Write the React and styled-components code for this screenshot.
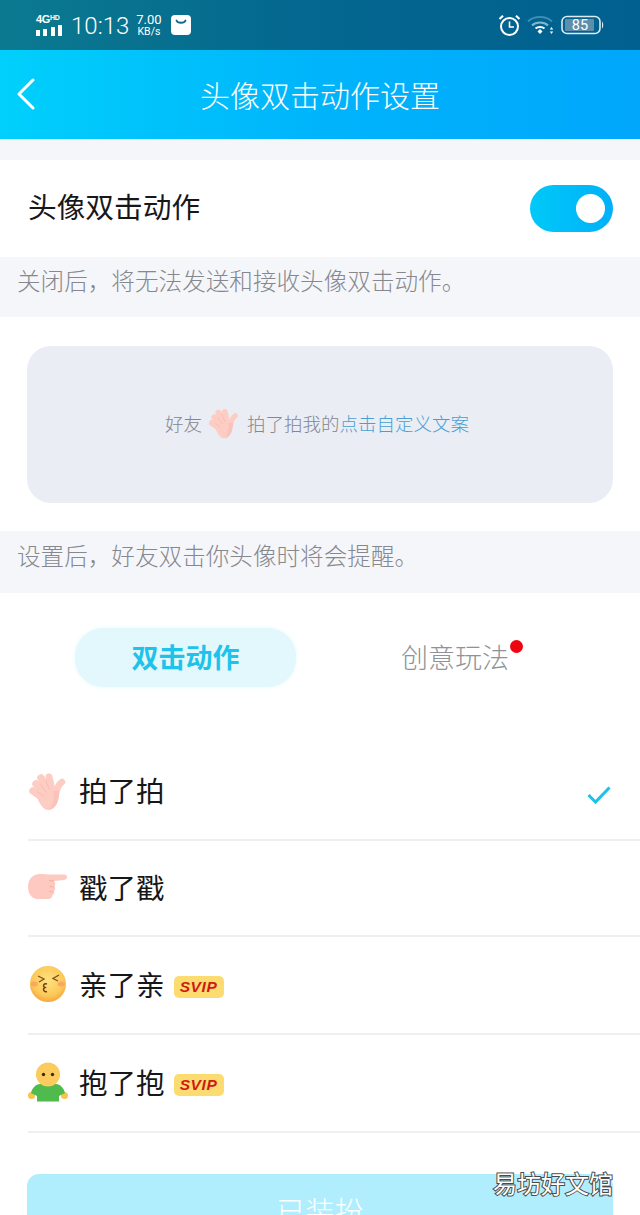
import React from 'react';
import styled, { createGlobalStyle } from 'styled-components';

const GlobalStyle = createGlobalStyle`
  html, body { margin: 0; padding: 0; background: #fff; }
  body { font-family: "Noto Sans CJK SC", "Noto Sans", sans-serif; }
`;

const Page = styled.div`
  position: relative;
  width: 640px;
  height: 1215px;
  overflow: hidden;
  background: #fff;
`;

const StatusBar = styled.div`
  height: 50px;
  display: flex;
  align-items: center;
  justify-content: space-between;
  padding: 0 36px;
  box-sizing: border-box;
  background: linear-gradient(90deg, #0b7a90, #04688f 45%, #01608f);
  color: #fff;
`;

const StatusGroup = styled.div`
  display: flex;
  align-items: center;
`;

const Signal = styled.div`
  width: 26px;
  display: flex;
  flex-direction: column;
  margin-right: 9px;
  margin-top: -2px;
`;

const NetLabel = styled.div`
  font-family: "Liberation Sans", sans-serif;
  font-weight: 700;
  font-size: 11px;
  line-height: 11px;
  white-space: nowrap;
  letter-spacing: -0.3px;
`;

const Small = styled.span`
  font-size: 7px;
  vertical-align: 3px;
`;

const Bars = styled.div`
  display: flex;
  align-items: flex-end;
  justify-content: space-between;
  height: 11px;
`;

const Bar = styled.i`
  display: block;
  width: 4px;
  height: ${p => p.$h}px;
  background: #fff;
`;

const Clock = styled.div`
  font-family: Roboto, sans-serif;
  font-weight: 300;
  font-size: 24px;
  line-height: 28px;
  margin-right: 7px;
  margin-top: 2px;
`;

const Speed = styled.div`
  font-family: Roboto, sans-serif;
  font-size: 13px;
  line-height: 12px;
  text-align: center;
  margin-right: 9px;
  margin-top: 1px;
  span { display: block; font-size: 10.5px; line-height: 11px; }
`;

const NavBar = styled.div`
  position: relative;
  height: 89px;
  display: flex;
  align-items: center;
  justify-content: center;
  background: linear-gradient(90deg, #00d0fb, #00b4fb 50%, #00a7fb);
`;

const BackIcon = styled.svg`
  position: absolute;
  left: 16px;
  top: 28px;
`;

const Title = styled.div`
  font-size: 30px;
  line-height: 40px;
  margin-bottom: 2px;
  color: #fff;
  font-weight: 300;
`;

const Spacer = styled.div`
  height: 21px;
  background: #f5f6fa;
`;

const SwitchRow = styled.div`
  height: 97px;
  display: flex;
  align-items: center;
  justify-content: space-between;
  padding: 0 27px 0 28px;
`;

const RowTitle = styled.div`
  font-size: 28.7px;
  margin-bottom: 6px;
  color: #17171a;
  font-weight: 400;
`;

const Toggle = styled.div`
  width: 83px;
  height: 47px;
  border-radius: 24px;
  background: linear-gradient(90deg, #00c9f8, #00b0f8);
  display: flex;
  align-items: center;
  justify-content: flex-end;
  padding-right: 8px;
  box-sizing: border-box;
`;

const Knob = styled.div`
  width: 29px;
  height: 29px;
  border-radius: 50%;
  background: #fff;
`;

const Note = styled.div`
  height: ${p => p.$h}px;
  display: flex;
  align-items: center;
  padding: 0 0 15px 17px;
  box-sizing: border-box;
  background: #f5f6fa;
  color: #85888e;
  font-size: 23.6px;
  font-weight: 300;
`;

const PreviewArea = styled.div`
  height: 214px;
  padding: 29px 27px 28px;
  box-sizing: border-box;
`;

const PreviewCard = styled.div`
  height: 157px;
  border-radius: 24px;
  background: #ebedf5;
  display: flex;
  align-items: center;
  justify-content: center;
  padding: 0 6px 4px 0;
  box-sizing: border-box;
  font-size: 18.5px;
  font-weight: 300;
  color: #85878f;
`;

const HandSlot = styled.span`
  display: flex;
  margin: 0 7px 0 6px;
`;

const Link = styled.span`
  color: #4a9fd0;
`;

const Tabs = styled.div`
  height: 151px;
  display: flex;
  align-items: flex-start;
  padding: 35px 0 0 75px;
  box-sizing: border-box;
`;

const ActiveTab = styled.div`
  width: 221px;
  height: 59px;
  border-radius: 28px;
  background: #e2f8fd;
  box-shadow: 0 0 4px #e8f9fd;
  display: flex;
  align-items: center;
  justify-content: center;
  padding-bottom: 2px;
  box-sizing: border-box;
  color: #1ec3eb;
  font-size: 27px;
  font-weight: 700;
`;

const PlainTab = styled.div`
  position: relative;
  margin-left: 105px;
  height: 59px;
  display: flex;
  align-items: center;
  padding-bottom: 2px;
  box-sizing: border-box;
  color: #8f9297;
  font-size: 27px;
  font-weight: 300;
`;

const Dot = styled.i`
  position: absolute;
  right: -14px;
  top: 12px;
  width: 13px;
  height: 13px;
  border-radius: 50%;
  background: #ee0512;
`;

const List = styled.div`
  margin-left: 28px;
`;

const Item = styled.div`
  height: ${p => p.$h || 97}px;
  display: flex;
  align-items: center;
  border-bottom: 2px solid #eeeff1;
  box-sizing: border-box;
  padding: 0 29px 2px 0;
`;

const Emoji = styled.span`
  width: 40px;
  height: 40px;
  display: flex;
  margin-right: 11px;
`;

const ItemLabel = styled.div`
  font-size: 28.5px;
  font-weight: 400;
  margin-bottom: 2px;
  color: #17171a;
`;

const Svip = styled.span`
  margin: 6px 0 0 9px;
  width: 50px;
  height: 22px;
  border-radius: 5px;
  background: #fcdc70;
  display: flex;
  align-items: center;
  justify-content: center;
  color: #cf1a14;
  font-family: "Liberation Sans", sans-serif;
  font-weight: 700;
  font-style: italic;
  font-size: 15.5px;
  letter-spacing: 0.6px;
`;

const Check = styled.svg`
  margin: 8px 0 0 auto;
`;

const Footer = styled.div`
  padding: 41px 27px 0;
`;

const WearButton = styled.div`
  height: 72px;
  border-radius: 12px;
  background: #b1eefd;
  color: #fff;
  display: flex;
  align-items: center;
  justify-content: center;
  font-size: 29px;
  font-weight: 300;
`;

const Watermark = styled.div`
  position: absolute;
  right: 27px;
  top: 1167px;
  font-size: 24px;
  line-height: 32px;
  color: #fff;
  -webkit-text-stroke: 2px #4a4a4a;
  paint-order: stroke fill;
`;

const Bag = () => (
  <svg width="20" height="20" viewBox="0 0 20 20">
    <rect width="20" height="20" rx="4" fill="#fff" />
    <path d="M5.500 5.500c1 3 8 3 9 0" fill="none" stroke="#0a6a8a" strokeWidth="1.800" strokeLinecap="round" />
  </svg>
);

const Alarm = () => (
  <svg width="23" height="23" viewBox="0 0 23 23" fill="none" stroke="#fff" style={{ marginRight: 6 }}>
    <circle cx="11.500" cy="12.500" r="8.500" strokeWidth="2" />
    <path d="M11.500 7.500v5.500h4.500" strokeWidth="1.600" />
    <path d="M1.500 5L5 1.800M21.500 5L18 1.800" strokeWidth="2.200" />
  </svg>
);

const Wifi = () => (
  <svg width="28" height="22" viewBox="0 0 28 22" fill="none" style={{ marginRight: 6 }}>
    <path d="M1 7.500C7 1.500 19 1.500 25 7.500" stroke="#3b8fb0" strokeWidth="2" />
    <path d="M5 11.500C9 7.500 17 7.500 21 11.500" stroke="#7fb6cc" strokeWidth="2" />
    <path d="M8.500 14.500C11 12.500 15 12.500 17.500 14.500" stroke="#fff" strokeWidth="2" />
    <path d="M10.500 17.500l2.500-2.500 2.500 2.500-2.500 2.500z" fill="#fff" />
    <path d="M24.500 13l1.700 2.500h-3.400zM24.500 20l1.700-2.500h-3.400z" fill="#fff" />
  </svg>
);

const Battery = () => (
  <svg width="43" height="20" viewBox="0 0 43 20">
    <rect x="1" y="1.500" width="38" height="17" rx="5" fill="none" stroke="#dfeaf0" strokeWidth="1.600" />
    <rect x="4" y="4" width="29" height="12" rx="1" fill="#5f8eab" />
    <path d="M41 6.500c1.600 1 1.600 6 0 7z" fill="#dfeaf0" />
    <text x="19" y="15" textAnchor="middle" fontFamily="Roboto, sans-serif" fontSize="14.500" fill="#fff">85</text>
  </svg>
);

const Hand = ({ size }) => (
  <svg width={size} height={size} viewBox="0 0 40 40">
    <g stroke="#fdcdc4" strokeLinecap="round" fill="none">
      <path d="M5 20l10 7" strokeWidth="7.500" />
      <path d="M8 13l9 10" strokeWidth="7.500" />
      <path d="M13 7l8 14" strokeWidth="7.500" />
      <path d="M21 6l3 13" strokeWidth="7" />
      <path d="M34 11c-3 2-5 6-6 12" strokeWidth="6.500" />
    </g>
    <path d="M8 24l12-10 11 5c1 11-4 20-11 20-5 0-9-7-12-15z" fill="#fdcdc4" />
    <path d="M25 20c2 6 1 12-4 19 6-1 10-7 10-19z" fill="#f8b7ac" opacity="0.500" />
    <path d="M9 20.500l7 5M12.500 13.500l6 8M17.500 9l4 10" stroke="#f7b9ae" strokeWidth="0.900" fill="none" />
  </svg>
);

const PointHand = () => (
  <svg width="40" height="40" viewBox="0 0 40 40">
    <path
      d="M0 20C0 12 5 7 12 7c4 0 7 .500 10 .500h14c2 0 3 1 3 2.500s-1 2.700-3 3l-10 1c1.500 2 1.500 4 .500 5.500 1 1.500 .800 3.500-.500 4.500.500 1.500 0 3-1.500 4 0 2.500-2 4-4.500 4H12C5 33 0 28 0 20z"
      fill="#fdc9c0"
    />
    <path d="M21 13.500l5 .500M21.500 19.500l4.500.500M21.500 24.500l3.500.500" stroke="#f6aea3" strokeWidth="1" fill="none" />
  </svg>
);

const KissFace = () => (
  <svg width="40" height="40" viewBox="0 0 40 40">
    <defs>
      <radialGradient id="kiss" cx="50%" cy="40%" r="60%">
        <stop offset="0%" stopColor="#ffe27e" />
        <stop offset="70%" stopColor="#fdc95a" />
        <stop offset="100%" stopColor="#f5a83e" />
      </radialGradient>
    </defs>
    <circle cx="20" cy="20" r="18" fill="url(#kiss)" />
    <ellipse cx="6.500" cy="20" rx="3.500" ry="2.500" fill="#f5836a" opacity="0.500" />
    <ellipse cx="33" cy="20" rx="3.500" ry="2.500" fill="#f5836a" opacity="0.500" />
    <path d="M10 12l6 3-5 3M31 11l-6 3.500 5 2.500" stroke="#7a5020" strokeWidth="1.300" fill="none" />
    <path d="M19 20c-3-1-5 2-2 3.500-3 1.500-1 5 2 4" stroke="#6a4418" strokeWidth="1.500" fill="none" />
  </svg>
);

const HugPerson = () => (
  <svg width="40" height="40" viewBox="0 0 40 40">
    <circle cx="3.500" cy="33.500" r="3.500" fill="#f9c44e" />
    <circle cx="36.500" cy="33.500" r="3.500" fill="#f9c44e" />
    <path d="M12 22h16c4 0 8 4 9 9l-6 3v5.500H9V34l-6-3c1-5 5-9 9-9z" fill="#4fbb4c" />
    <circle cx="20" cy="12.500" r="12" fill="#fccb5e" />
    <circle cx="15.500" cy="12.500" r="1.700" fill="#40290f" />
    <circle cx="24.500" cy="12.500" r="1.700" fill="#40290f" />
  </svg>
);

const actions = [
  { name: '拍了拍', icon: <Hand size={40} />, h: 97, checked: true },
  { name: '戳了戳', icon: <PointHand />, h: 96 },
  { name: '亲了亲', icon: <KissFace />, h: 98, svip: true },
  { name: '抱了抱', icon: <HugPerson />, h: 98, svip: true },
];

export default function App() {
  return (
    <Page>
      <GlobalStyle />
      <StatusBar>
        <StatusGroup>
          <Signal>
            <NetLabel>4G<Small>HD</Small></NetLabel>
            <Bars>
              <Bar $h={6} />
              <Bar $h={7} />
              <Bar $h={9} />
              <Bar $h={11} />
            </Bars>
          </Signal>
          <Clock>10:13</Clock>
          <Speed>7.00<span>KB/s</span></Speed>
          <Bag />
        </StatusGroup>
        <StatusGroup>
          <Alarm />
          <Wifi />
          <Battery />
        </StatusGroup>
      </StatusBar>
      <NavBar>
        <BackIcon width="20" height="32" viewBox="0 0 20 32" fill="none">
          <path d="M17 2L3 16l14 14" stroke="#fff" strokeWidth="3" strokeLinecap="round" strokeLinejoin="round" />
        </BackIcon>
        <Title>头像双击动作设置</Title>
      </NavBar>
      <Spacer />
      <SwitchRow>
        <RowTitle>头像双击动作</RowTitle>
        <Toggle><Knob /></Toggle>
      </SwitchRow>
      <Note $h={60}>关闭后，将无法发送和接收头像双击动作。</Note>
      <PreviewArea>
        <PreviewCard>
          好友
          <HandSlot><Hand size={32} /></HandSlot>
          拍了拍我的<Link>点击自定义文案</Link>
        </PreviewCard>
      </PreviewArea>
      <Note $h={62}>设置后，好友双击你头像时将会提醒。</Note>
      <Tabs>
        <ActiveTab>双击动作</ActiveTab>
        <PlainTab>创意玩法<Dot /></PlainTab>
      </Tabs>
      <List>
        {actions.map(a => (
          <Item key={a.name} $h={a.h}>
            <Emoji>{a.icon}</Emoji>
            <ItemLabel>{a.name}</ItemLabel>
            {a.svip && <Svip>SVIP</Svip>}
            {a.checked && (
              <Check width="24" height="20" viewBox="0 0 24 20" fill="none">
                <path d="M1.500 10l7 7L22.500 2.500" stroke="#1cc1ec" strokeWidth="3" />
              </Check>
            )}
          </Item>
        ))}
      </List>
      <Footer>
        <WearButton>已装扮</WearButton>
      </Footer>
      <Watermark>易坊好文馆</Watermark>
    </Page>
  );
}
